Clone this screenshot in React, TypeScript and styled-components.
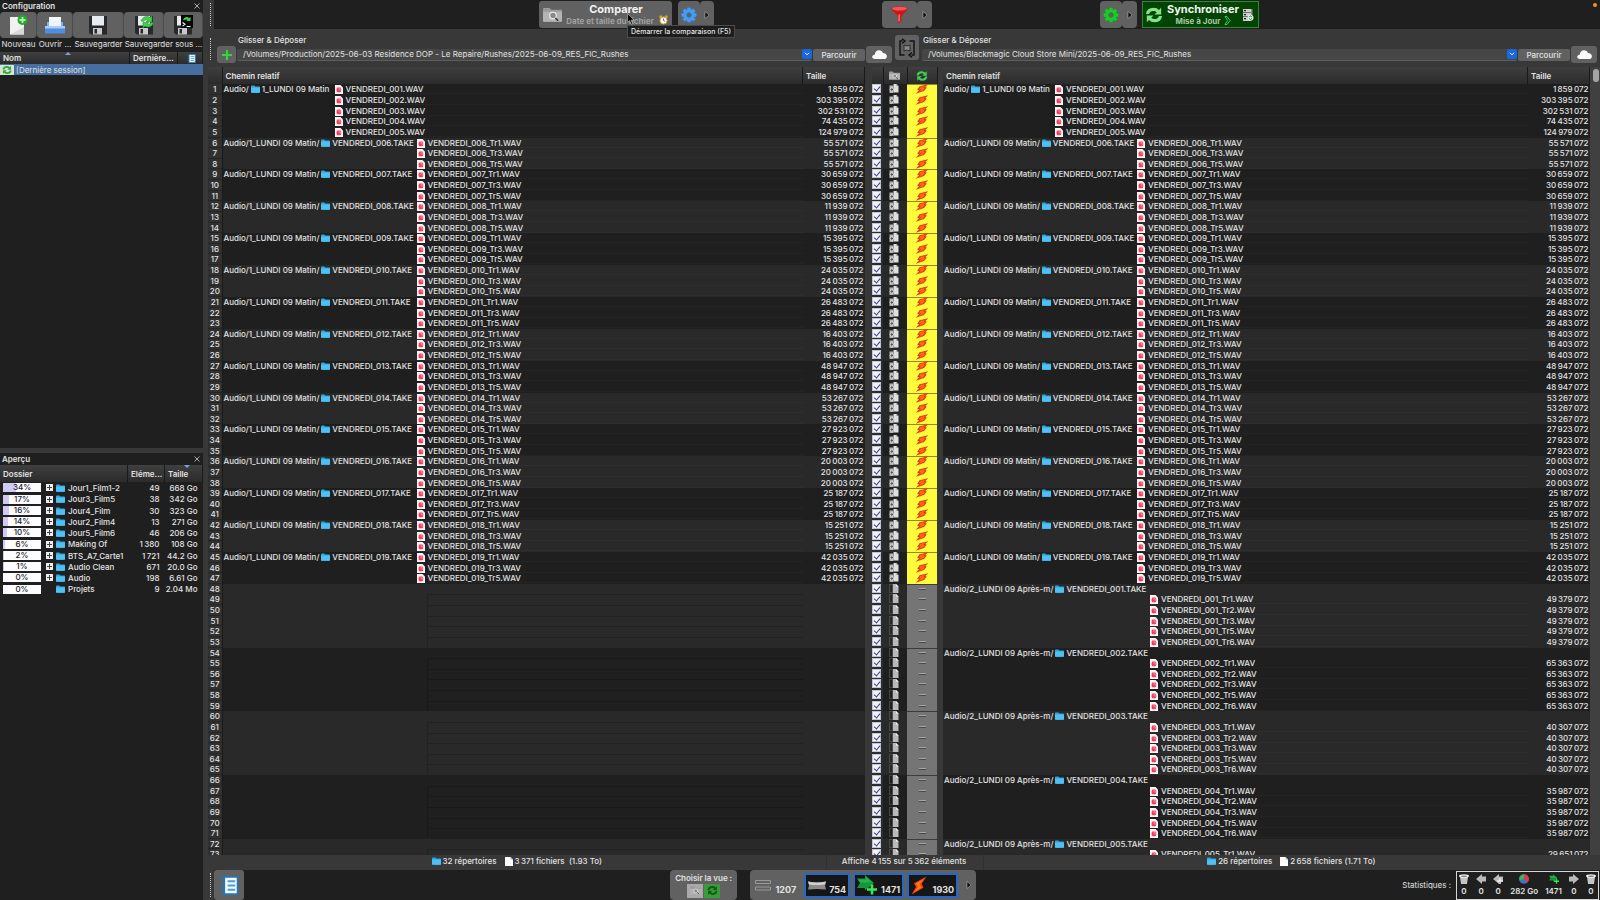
import React from 'react';
import styled, { createGlobalStyle, css } from 'styled-components';

const dark = '#1f1f1f';
const chrome = '#383838';
const button = '#616161';
const line = '#191919';

const Global = createGlobalStyle`
  * { box-sizing: border-box; }
  html, body, #root { height: 100%; }
  body { margin: 0; background: ${dark}; overflow: hidden; }
  body, button, input { font-family: Inter, "Liberation Sans", sans-serif; font-size: 8px; line-height: 10px; color: #e2e2e2; }
  button { border: 0; padding: 0; margin: 0; background: none; }
  table { border-collapse: collapse; border-spacing: 0; table-layout: fixed; width: 100%; }
  td, th { padding: 0; }
  svg { display: block; flex: none; }
`;

/* ---------- data ---------- */

const group = (n: number) => String(n).replace(/\B(?=(\d{3})+(?!\d))/g, '\u2009');

type Row = {
  no: number;
  alt: boolean;
  first: boolean;
  both: boolean;
  parent?: string;
  folder?: string;
  file?: string;
  size?: string;
  indent: 'near' | 'mid' | 'far';
};

const matin = [
  55571072, 30659072, 11939072, 15395072, 24035072, 26483072, 16403072,
  48947072, 53267072, 27923072, 20003072, 25187072, 15251072, 42035072,
];
const apres = [49379072, 65363072, 40307072, 35987072, 29651072];
const pad = (n: number) => String(n).padStart(3, '0');

const rows: Row[] = [];
const add = (r: Omit<Row, 'no'>) => rows.push({ no: rows.length + 1, ...r });

[1859072, 303395072, 302531072, 74435072, 124979072].forEach((s, i) =>
  add({
    alt: false, first: i === 0, both: true, indent: 'near', file: `VENDREDI_${pad(i + 1)}.WAV`, size: group(s),
    ...(i === 0 ? { parent: 'Audio/', folder: '1_LUNDI 09 Matin' } : {}),
  }),
);
matin.forEach((s, g) =>
  [1, 3, 5].forEach((t, i) =>
    add({
      alt: g % 2 === 0, first: i === 0, both: true, indent: 'mid',
      file: `VENDREDI_${pad(g + 6)}_Tr${t}.WAV`, size: group(s),
      ...(i === 0 ? { parent: 'Audio/1_LUNDI 09 Matin/', folder: `VENDREDI_${pad(g + 6)}.TAKE` } : {}),
    }),
  ),
);
apres.forEach((s, g) => {
  const alt = g % 2 === 0;
  add({ alt, first: true, both: false, indent: 'far', parent: 'Audio/2_LUNDI 09 Après-m/', folder: `VENDREDI_${pad(g + 1)}.TAKE` });
  (g === 4 ? [1] : [1, 2, 3, 5, 6]).forEach((t) =>
    add({ alt, first: false, both: false, indent: 'far', file: `VENDREDI_${pad(g + 1)}_Tr${t}.WAV`, size: group(s) }),
  );
});

const overview: [number, string, string, string][] = [
  [34, 'Jour1_Film1-2', '49', '668 Go'],
  [17, 'Jour3_Film5', '38', '342 Go'],
  [16, 'Jour4_Film', '30', '323 Go'],
  [14, 'Jour2_Film4', '13', '271 Go'],
  [10, 'Jour5_Film6', '46', '206 Go'],
  [6, 'Making Of', group(1380), '108 Go'],
  [2, 'BTS_A7_Carte1', group(1721), '44.2 Go'],
  [1, 'Audio Clean', '671', '20.0 Go'],
  [0, 'Audio', '198', '6.61 Go'],
  [0, 'Projets', '9', '2.04 Mo'],
];

/* ---------- icons ---------- */

const Folder = () => (
  <svg width="9" height="8" viewBox="0 0 9 8">
    <path d="M0 1.2Q0 .4.8.4h2.6l.9 1H8.2q.8 0 .8.8V7q0 .7-.8.7H.8Q0 7.700 0 7z" fill="#2ea3dc" />
    <path d="M0 2.400h9V7q0 .7-.8.7H.8Q0 7.700 0 7z" fill="#4fc0f2" />
  </svg>
);

const WavIcon = () => (
  <svg width="8" height="9" viewBox="0 0 8 9">
    <path d="M0 0h5.500L8 2.500V9H0z" fill="#fbf3f4" />
    <rect x="1.600" y="2.600" width="4.600" height="4.600" rx="1.300" fill="#ee3f5c" />
    <path d="M3.200 4l2-.4v2.200" stroke="#fbd" strokeWidth=".6" fill="none" />
  </svg>
);

const Page = () => (
  <svg width="8" height="9" viewBox="0 0 8 9">
    <path d="M0 0h5.500L8 2.500V9H0z" fill="#fff" />
    <path d="M5.500 0v2.500H8z" fill="#bbb" />
  </svg>
);

const Recycle = ({ size, color = '#3fd04c' }: { size: number; color?: string }) => (
  <svg width={size} height={size} viewBox="0 0 20 20" fill={color}>
    <path d="M1 9Q2 2 9.500 2q4 0 6 2.500L18 2v7.500h-7.500l2.600-2.600Q11.500 5.500 9.500 5.500 5.500 5.500 4.500 9z" />
    <path d="M19 11q-1 7-8.500 7-4 0-6-2.500L2 18v-7.500h7.500l-2.600 2.600q1.600 1.400 3.600 1.400 4 0 5-3.500z" />
  </svg>
);

const Gear = ({ size, color, edge }: { size: number; color: string; edge: string }) => (
  <svg width={size} height={size} viewBox="0 0 20 20">
    {[0, 45, 90, 135].map((a) => (
      <rect key={a} x="7.500" y=".5" width="5" height="19" rx="1" fill={color} stroke={edge} strokeWidth=".5" transform={`rotate(${a} 10 10)`} />
    ))}
    <circle cx="10" cy="10" r="7" fill={color} />
    <circle cx="10" cy="10" r="2.800" fill={button} stroke={edge} strokeWidth="1" />
  </svg>
);

const CameraFolder = ({ w }: { w: number }) => (
  <svg width={w} height={(w * 16) / 20} viewBox="0 0 20 16">
    <path d="M0 2Q0 1 1 1h6l1.500 2H19q1 0 1 1v10.500q0 1-1 1H1q-1 0-1-1z" fill="#9b9b9b" />
    <path d="M0 5h20v9.500q0 1-1 1H1q-1 0-1-1z" fill="#b4b4b4" />
    <circle cx="10.500" cy="9" r="3.500" fill="#8a8a8a" stroke="#eee" strokeWidth="1.200" />
    <path d="M13 11.500l3 3" stroke="#333" strokeWidth="1.600" />
  </svg>
);

const Bolt = ({ w, h }: { w: number; h: number }) => (
  <svg width={w} height={h} viewBox="0 0 16 20" preserveAspectRatio="none">
    <path d="M15.500.5L3 7.500l2 4.200L.5 19.500l12-7.200-1.800-4.200z" fill="#f4420e" />
    <path d="M13 2.800L4.800 8l2.400 3.200L3 17l7.400-5-2-3.400z" fill="#ff7a1c" />
  </svg>
);

const RowBolt = () => (
  <svg width="14" height="10" viewBox="0 0 14 10">
    <path d="M13.500 .2L4.500 2.200 2.200 6l2 .3L.6 9.800l8.400-2.800L11.800 3.400l-1.600-.3z" fill="#e0380c" />
    <path d="M10.500 1.800L5.200 3 4 5.200l2 .3L4 7.800 8.300 6.200l1.700-2.300-1.800-.2z" fill="#ff6a14" />
  </svg>
);

const Cloud = () => (
  <svg width="15" height="9" viewBox="0 0 15 9">
    <path d="M3 9Q0 8.800.2 6.500.6 4.600 2.800 4.400 3.200.4 7 .2q3 0 3.900 2.700Q14.700 3 14.900 6.200 14.800 9 12 9z" fill="#fafafa" />
  </svg>
);

const NewFile = () => (
  <svg width="20" height="20" viewBox="0 0 20 20">
    <path d="M2 2h9l5 6v11.500H2z" fill="#f1f1f1" />
    <path d="M16 19.500H2L16 12z" fill="#d8d8d8" />
    <circle cx="14.500" cy="5" r="5" fill="#27a52c" />
    <path d="M14.500 2v6M11.500 5h6" stroke="#a8f5a0" strokeWidth="1.800" />
  </svg>
);

const OpenTray = () => (
  <svg width="20" height="20" viewBox="0 0 20 20">
    <path d="M4 2h12v8H4z" fill="#f7f9fc" />
    <path d="M2 7h16v6H2z" fill="#7fb1ee" />
    <path d="M4 5h12v6H4z" fill="#eef4fc" />
    <path d="M0 11h20v7.500H0z" fill="#4e8de0" />
    <path d="M0 11h20v2.500H0z" fill="#a9cdf8" />
  </svg>
);

const Floppy = ({ badge }: { badge?: 'sync' | 'batch' }) => (
  <svg width="20" height="20" viewBox="0 0 20 20">
    <path d="M1 1h18v18.500H3l-2-2z" fill="#27292c" />
    <path d="M4 1h12v9.500H4z" fill="#e6ecef" />
    <path d="M5 13h9v6.500H5z" fill="#c9c9c9" />
    <path d="M6.500 14h2.500v4.500H6.500z" fill="#27292c" />
    {badge === 'sync' && (
      <g fill="#43d04b" stroke="#168a22" strokeWidth=".5">
        <path d="M7 6q2-5 7-4.500l2 1L18 .5V7h-6l1.700-1.700Q11 4 9.500 6.500z" />
        <path d="M19.500 7.500Q18 12.500 13 12l-2-.8L9 13V7.500h5.500L13 9q2.500 1 4-1.500z" />
      </g>
    )}
    {badge === 'batch' && (
      <g>
        <path d="M8 0h12v13H8z" fill="#060606" />
        <path d="M10 4.500q3-4 6-1.500l1.500-1v4h-4l1-1.200q-2-1-3.500.5z" fill="#43d04b" />
        <path d="M9.500 7.500l2.500 1.800-2.500 1.800M13.500 11.500h4" stroke="#fff" strokeWidth="1.100" fill="none" />
      </g>
    )}
  </svg>
);

const ListPanel = ({ size }: { size: number }) => (
  <svg width={size} height={size} viewBox="0 0 20 20">
    <path d="M4.500 1h14v18h-14z" fill="#f4f9fc" stroke="#1f78b8" strokeWidth="1.800" />
    <path d="M8 5.500h8M8 10h8M8 14.500h8" stroke="#4a9fd6" strokeWidth="1.900" />
    <path d="M1 3.500h3M1 7h3M1 10.500h3M1 14h3M1 17.500h3" stroke="#1f78b8" strokeWidth="1.300" />
  </svg>
);

const Funnel = () => (
  <svg width="17" height="18" viewBox="0 0 17 18">
    <path d="M.5 2Q8.500-1.500 16.500 2v1.500L10.500 10v5L6.800 17.800V10L.5 3.500z" fill="#d01319" />
    <ellipse cx="8.500" cy="2.600" rx="7.500" ry="1.900" fill="#f2565a" />
    <path d="M7.500 9v7l1.200-1V8z" fill="#ff8a8a" />
  </svg>
);

const Swap = () => (
  <svg width="18" height="20" viewBox="0 0 18 20" fill="none" stroke="#151515" strokeWidth="1.500">
    <path d="M4.500 3H2v14h4.500M13.500 17H16V3h-4.500" />
    <path d="M4 .8L7 3 4 5.500M14 14.500L11 17l3 2.400" />
    <path d="M6 7l3 1 3-1v6l-3-1-3 1z" fill="#8b8b8b" stroke="#2a2a2a" strokeWidth="1" />
  </svg>
);

const AlarmClock = () => (
  <svg width="9" height="10" viewBox="0 0 9 10">
    <circle cx="1.800" cy="1.800" r="1.500" fill="#d8a030" />
    <circle cx="7.200" cy="1.800" r="1.500" fill="#d8a030" />
    <circle cx="4.500" cy="5.500" r="3.500" fill="#fff" stroke="#e0a73a" />
    <path d="M4.500 3.500v2l1.500 1" stroke="#333" strokeWidth=".7" fill="none" />
  </svg>
);

const Pointer = () => (
  <svg width="8" height="12" viewBox="0 0 8 12">
    <path d="M.5.500v9l2.200-2 1.500 3.800 1.400-.6-1.500-3.600H7z" fill="#000" stroke="#ddd" strokeWidth=".5" />
  </svg>
);

const Server = () => (
  <svg width="11" height="12" viewBox="0 0 11 12">
    <path d="M0 0h8v12H0z" fill="#cfcfcf" />
    <path d="M0 3.500h8M0 7.500h8" stroke="#555" strokeWidth=".8" />
    <path d="M1 1h2v1.300H1zM1 5h2v1.300H1zM1 9h2v1.300H1z" fill="#222" />
    <path d="M8 0h1.500v6H8z" fill="#8d8d8d" />
    <circle cx="7.500" cy="8.700" r="3" fill="#e8e8e8" />
    <path d="M6 8q1.500-2 3 0M9 9.500q-1.500 2-3 0" stroke="#18a03a" fill="none" />
  </svg>
);

const Copies = () => (
  <svg width="10" height="9" viewBox="0 0 10 9">
    <path d="M4.500 0h3L9.500 2v6.500h-5z" fill="#dedede" />
    <path d="M7.500 0v2h2z" fill="#888" />
    <path d="M.5 1.500h4V9h-4z" fill="#b4b4b4" />
    <circle cx="2.800" cy="5.500" r="1.700" fill="#555" stroke="#f0f0f0" strokeWidth=".8" />
  </svg>
);

const CopyRight = () => (
  <svg width="10" height="9" viewBox="0 0 10 9">
    <path d="M.5.500h3v8h-3z" fill="none" stroke="#6a6a6a" strokeDasharray="1 1" />
    <path d="M4 0h3l2.500 2.500V9H4z" fill="#b9b9b9" />
    <path d="M7 0v2.500h2.500z" fill="#f2f2f2" />
  </svg>
);

const GreenArrow = ({ size }: { size: number }) => (
  <svg width={size} height={size} viewBox="0 0 20 20">
    <path d="M0 3.500h8V0l9 8-9 7.500V13H0l3-5z" fill="#14963a" />
    <path d="M1 4.500h8V2l6 5.500H3z" fill="#2fc45a" opacity=".6" />
    <path d="M15 9.500v10M10 14.500h10" stroke="#34e85a" strokeWidth="2.600" />
  </svg>
);

const GreyArrow = ({ dir, split }: { dir: 'left' | 'right'; split?: boolean }) => (
  <svg width="10" height="10" viewBox="0 0 10 10">
    <path
      d={dir === 'left' ? 'M0 5L6 0v2.500h4v5H6V10z' : 'M10 5L4 0v2.500H0v5h4V10z'}
      fill="#b9b9b9"
    />
    {split && <path d="M7 4v6M4 7h6" stroke="#ececec" strokeWidth="1.600" />}
  </svg>
);

const Trash = () => (
  <svg width="10" height="10" viewBox="0 0 10 10">
    <path d="M1 2.500h8L8 10H2z" fill="#c4c4c4" />
    <ellipse cx="5" cy="2" rx="5" ry="1.800" fill="#f4f4f4" />
    <ellipse cx="5" cy="2.200" rx="3.200" ry=".8" fill="#777" />
  </svg>
);

const Pie = () => (
  <svg width="10" height="10" viewBox="0 0 10 10">
    <circle cx="5" cy="5" r="4.800" fill="#3c6fd0" />
    <path d="M5 5V.2A4.800 4.800 0 0 0 .5 6.500z" fill="#47b04f" />
    <path d="M5 5V.2A4.800 4.800 0 0 1 8.500 8.300z" fill="#e23b3b" />
  </svg>
);

const Caret = () => (
  <svg width="6" height="8" viewBox="0 0 6 8">
    <path d="M1 .5L5 4 1 7.500z" fill="#0c0c0c" stroke="#c4c4c4" strokeWidth=".5" />
  </svg>
);

const Cross = () => (
  <svg width="6" height="6" viewBox="0 0 6 6">
    <path d="M.5.500l5 5M5.500.500l-5 5" stroke="#bbb" strokeWidth=".9" />
  </svg>
);

/* ---------- shell ---------- */

const Shell = styled.div`
  display: grid;
  grid-template-columns: 203px minmax(0, 1fr);
  column-gap: 5px;
  height: 100vh;
  background: ${chrome};
  overflow: hidden;
`;

const Dock = styled.aside`
  display: flex;
  flex-direction: column;
  gap: 5px;
  min-height: 0;
`;

const Panel = styled.section<{ $basis: number }>`
  flex: ${(p) => p.$basis} 1 0;
  min-height: 0;
  background: ${dark};
  display: flex;
  flex-direction: column;
`;

const PanelTitle = styled.h2`
  display: flex;
  align-items: center;
  justify-content: space-between;
  margin: 0;
  padding: 0 3px 0 2px;
  height: 12px;
  font-size: 8px;
  font-weight: 600;
`;

const Close = styled.button`
  width: 7px;
  height: 8px;
  display: grid;
  place-items: center;
`;

const FileTools = styled.div`
  display: grid;
  grid-template-columns: 37px 36px 51px 40px 39px;
`;

const Tool = styled.button`
  height: 26px;
  background: ${button};
  border-radius: 4px;
  border-right: 1px solid #4b4b4b;
  display: grid;
  place-items: center;
`;

const ToolCaption = styled.span<{ $span?: number }>`
  grid-column: span ${(p) => p.$span ?? 1};
  height: 14px;
  line-height: 12px;
  text-align: center;
  white-space: nowrap;
`;

const headFill = css`
  background: linear-gradient(#3f3f3f, #2b2b2b);
`;

const DockTable = styled.table`
  th {
    ${headFill}
    position: relative;
    text-align: left;
    font-weight: 600;
    padding-left: 3px;
    white-space: nowrap;
    border-right: 1px solid ${line};
  }
`;

const DockHead = styled.tr<{ $tall?: boolean }>`
  height: ${(p) => (p.$tall ? 17 : 12)}px;
`;

const SortMark = styled.i<{ $down?: boolean }>`
  position: absolute;
  top: 0;
  left: 50%;
  border: 3px solid transparent;
  border-top-width: 0;
  border-bottom-color: #7f9fe0;
  ${(p) => p.$down && css`border-top: 3px solid #7f9fe0; border-bottom: 0;`}
`;

const SessionRow = styled.tr`
  height: 11px;
  background: #466f9f;
`;

const Inline = styled.span`
  display: flex;
  align-items: center;
  gap: 2px;
  white-space: nowrap;
`;

const HeadIcon = styled.span`
  display: flex;
  justify-content: center;
`;

const SessionIcon = styled.span`
  padding: 0 2px;
  background: #d5e5d2;
`;

const OverRow = styled.tr`
  height: 11px;
  &:nth-child(4n + 2) { height: 12px; }
  td { white-space: nowrap; font-weight: 500; }
  td:nth-child(2), td:nth-child(3) { text-align: right; padding-right: 5px; }
`;

const OverName = styled.div`
  display: grid;
  grid-template-columns: 40px 7px 9px 1fr;
  column-gap: 3px;
  align-items: center;
  padding-left: 3px;
`;

const Share = styled.div`
  position: relative;
  height: 9px;
  width: 38px;
  background: #fcfcff;
  color: #222;
  text-align: center;
  line-height: 9px;
`;

const ShareFill = styled.i`
  position: absolute;
  inset: 0 auto 0 0;
  background: #cdcbf6;
`;

const ShareText = styled.span`
  position: relative;
`;

const Expand = styled.button<{ $empty?: boolean }>`
  width: 7px;
  height: 7px;
  display: grid;
  place-items: center;
  background: #eee;
  visibility: ${(p) => (p.$empty ? 'hidden' : 'visible')};
`;

const Main = styled.main`
  display: flex;
  flex-direction: column;
  min-width: 0;
  min-height: 0;
`;

const Bar = styled.div`
  display: flex;
  align-items: center;
  background: ${dark};
`;

const TopBar = styled(Bar)`
  height: 29px;
`;

const GripBox = styled.div`
  align-self: stretch;
  width: 6px;
  padding: 3px 2px;
  background: ${chrome};
  flex: none;
`;

const Grip = styled.div`
  height: 100%;
  border-left: 1px dotted #c9c9c9;
`;

const Space = styled.div<{ $grow: number }>`
  flex: ${(p) => p.$grow} 1 0;
`;

const Cluster = styled.div`
  display: flex;
  align-items: stretch;
  height: 27px;
`;

const Key = styled.button<{ $w: number }>`
  width: ${(p) => p.$w}px;
  background: ${button};
  border-radius: 4px;
  display: grid;
  place-items: center;
`;

const Compare = styled.button`
  position: relative;
  width: 133px;
  margin-right: 6px;
  background: ${button};
  border-radius: 3px;
  display: grid;
  grid-template-columns: 18px 1fr 9px;
  align-items: center;
  column-gap: 4px;
  padding: 0 4px;
`;

const Labels = styled.span<{ $lead?: boolean }>`
  display: grid;
  justify-items: center;
  white-space: nowrap;
  strong { padding-left: ${(p) => (p.$lead ? 12 : 0)}px; }
`;

const Big = styled.strong`
  font-size: 11px;
  line-height: 13px;
  font-weight: 700;
  color: #f4f4f4;
`;

const Sub = styled.span<{ $dim?: boolean }>`
  display: flex;
  gap: 3px;
  font-weight: 700;
  line-height: 10px;
  color: ${(p) => (p.$dim ? '#a0a0a0' : '#a9c4a9')};
`;

const ClockSlot = styled.span`
  align-self: end;
  padding-bottom: 3px;
`;

const CursorSlot = styled.span`
  position: absolute;
  left: 88px;
  top: 12px;
  z-index: 3;
`;

const Tooltip = styled.span`
  position: absolute;
  left: 88px;
  top: 24px;
  z-index: 2;
  padding: 0 3px;
  border: 1px solid #4c4c4c;
  background: #1d1d1d;
  font-size: 7px;
  line-height: 11px;
  font-weight: 500;
  color: #e2e2e2;
  white-space: nowrap;
`;

const Sync = styled.button`
  width: 117px;
  margin-left: 5px;
  background: #034403;
  border: 1px solid #2f8a37;
  display: grid;
  grid-template-columns: 18px 1fr 11px;
  column-gap: 2px;
  align-items: center;
  padding: 0 4px 0 2px;
`;

const TailSpace = styled(Space)`
  align-self: flex-start;
  display: flex;
  justify-content: flex-end;
  padding: 3px 3px 0 0;
`;

const Recording = styled.i`
  width: 4px;
  height: 4px;
  border-radius: 50%;
  background: #f7931e;
`;

const Paths = styled.div`
  display: flex;
  height: 38px;
  padding: 6px 3px 4px 0;
`;

const PathSide = styled.div<{ $left?: boolean }>`
  flex: 1 1 0;
  min-width: 0;
  display: grid;
  grid-template-rows: 11px 17px;
  padding-left: ${(p) => (p.$left ? 3 : 0)}px;
  label { padding-left: ${(p) => (p.$left ? 21 : 1)}px; font-weight: 500; }
`;

const PathRow = styled.div`
  display: flex;
  align-items: center;
  gap: 1px;
`;

const Combo = styled.div`
  flex: 1;
  display: flex;
  align-items: center;
  height: 12px;
  background: #464646;
  border-bottom: 1px solid #5e5e5e;
  border-radius: 2px;
`;

const PathInput = styled.input`
  flex: 1;
  min-width: 0;
  height: 11px;
  border: 0;
  outline: 0;
  padding: 0 6px;
  background: none;
`;

const Drop = styled.button`
  width: 10px;
  height: 10px;
  border-radius: 2px;
  background: #1668dc;
  display: grid;
  place-items: center;
`;

const Browse = styled.button`
  width: 52px;
  height: 12px;
  background: ${button};
  border-radius: 2px;
  font-weight: 500;
`;

const Square = styled.button<{ $w: number; $h: number }>`
  width: ${(p) => p.$w}px;
  height: ${(p) => p.$h}px;
  background: ${button};
  border-radius: 3px;
  display: grid;
  place-items: center;
  flex: none;
`;

const SwapSlot = styled.div`
  padding: 0 3px;
`;

/* ---------- file lists ---------- */

const Lists = styled.div`
  flex: 1;
  min-height: 0;
  overflow: hidden;
  display: flex;
`;

const Side = styled.div`
  flex: 1 1 0;
  min-width: 0;
  display: flex;
  overflow: hidden;
`;

const Middle = styled.div`
  width: 78px;
  padding: 0 6px 0 7px;
`;

const Grid = styled.table`
  font-weight: 500;
  thead tr { height: 17px; }
  th {
    ${headFill}
    text-align: left;
    font-weight: 600;
    padding-left: 3px;
    border-right: 1px solid ${line};
  }
`;

const ActionGrid = styled(Grid)`
  th { padding-left: 0; }
  th:nth-child(2), td:nth-child(2) { padding-right: 2px; }
`;

const Line = styled.tr<{ $alt: boolean }>`
  height: 11px;
  background: ${(p) => (p.$alt ? '#292929' : dark)};
  &:nth-child(8n + 3), &:nth-child(8n + 6), &:nth-child(8n + 8) { height: 10px; }
  td { height: inherit; line-height: 10px; vertical-align: top; }
`;

const No = styled.td`
  background: #303030;
  border-right: 1px solid ${line};
  text-align: center;
  box-shadow: inset 0 -1px #262626;
`;

const NameCell = styled.td`
  padding-left: 1px;
  overflow: hidden;
`;

const indents = { near: 111, mid: 193, far: 206 };

const NameFlow = styled.div`
  display: flex;
  align-items: center;
  height: 10px;
  white-space: nowrap;
`;

const PathPart = styled.span<{ $indent: Row['indent'] }>`
  display: flex;
  align-items: center;
  gap: 2px;
  flex: none;
  width: ${(p) => indents[p.$indent]}px;
`;

const FilePart = styled.span`
  flex: 1;
  display: flex;
  align-items: center;
  gap: 3px;
  height: 10px;
  box-shadow: inset 0 -1px #ffffff06;
`;

const EmptyPart = styled.div<{ $first: boolean }>`
  height: 10px;
  margin-left: 203px;
  ${(p) => !p.$first && css`box-shadow: inset 1px 1px #00000030;`}
`;

const SizeCell = styled.td`
  text-align: right;
  padding-right: 1px;
`;

const Check = styled.input`
  appearance: none;
  display: block;
  position: relative;
  width: 9px;
  height: 9px;
  margin: 0;
  background: #f2f2f6;
  border: 1px solid #c4c4cc;
  &:checked::after {
    content: '';
    position: absolute;
    left: 2px;
    top: 0;
    width: 3px;
    height: 5px;
    border: solid #33409a;
    border-width: 0 1px 1px 0;
    rotate: 40deg;
  }
`;

const CheckCell = styled.td`
  background: #2a2e31;
`;

const IconCell = styled.td`
  svg { margin: 0 auto; }
`;

const ActionCell = styled.td<{ $both: boolean; $first: boolean }>`
  background: ${(p) => (p.$both ? '#fcfc3c' : '#757575')};
  ${(p) => p.$first && css`box-shadow: inset 0 1px ${p.$both ? '#8a8a2a' : '#3c3c3c'};`}
  svg { margin: 0 auto; }
`;

const Dash = styled.i`
  display: block;
  width: 7px;
  height: 2px;
  margin: 4px auto 0;
  background: #a5a5a5;
  border-bottom: 1px solid #4a4a4a;
`;

const Scroll = styled.div`
  width: 10px;
  padding: 2px 3px;
  background: #404040;
  flex: none;
`;

const Thumb = styled.div`
  width: 6px;
  height: 13px;
  border-radius: 3px;
  background: #a5a5a5;
`;

/* ---------- footer ---------- */

const Status = styled.div`
  display: grid;
  grid-template-columns: 1fr 157px 1fr;
  height: 15px;
  font-weight: 500;
`;

const StatusPart = styled.div`
  display: flex;
  align-items: center;
  justify-content: center;
  gap: 8px;
  padding-bottom: 3px;
  & + & { box-shadow: inset 1px 0 #303030; }
`;

const BottomBar = styled(Bar)`
  height: 30px;
`;

const Views = styled.div`
  display: flex;
  height: 30px;
  background: ${button};
  border-radius: 4px;
  margin-left: 13px;
  gap: 3px;
  align-items: center;
`;

const ViewChoice = styled.div`
  width: 67px;
  height: 30px;
  background: ${button};
  border-radius: 4px;
  display: grid;
  justify-items: center;
  align-content: center;
  gap: 1px;
  font-weight: 600;
  white-space: nowrap;
`;

const Pair = styled.div`
  display: flex;
  gap: 1px;
`;

const Mini = styled.button<{ $on?: boolean }>`
  width: 16px;
  height: 14px;
  background: ${(p) => (p.$on ? '#3c9a3a' : '#a9a9a9')};
  display: grid;
  place-items: center;
`;

const Count = styled.button<{ $w: number; $on?: boolean }>`
  width: ${(p) => p.$w}px;
  height: 25px;
  display: flex;
  align-items: center;
  justify-content: space-between;
  padding: 0 5px;
  font-size: 9px;
  font-weight: 700;
  ${(p) => p.$on && css`background: #161616; border: 2px solid #2468c8; padding: 0 2px;`}
`;

const CountText = styled.span<{ $low?: boolean }>`
  align-self: end;
  padding-bottom: ${(p) => (p.$low ? 3 : 1)}px;
`;

const Stats = styled.dl`
  display: flex;
  justify-content: space-between;
  width: 143px;
  height: 29px;
  margin: 0 1px 0 5px;
  padding: 0 2px;
  border: 1px solid #d5d5d5;
`;

const Stat = styled.div`
  display: grid;
  justify-items: center;
  align-content: center;
  gap: 2px;
  min-width: 10px;
  dt { display: block; }
  dd { margin: 0; font-size: 8px; font-weight: 600; white-space: nowrap; }
`;

const PathEditor = ({ id, value, left }: { id: string; value: string; left?: boolean }) => (
  <PathSide $left={left}>
    <label htmlFor={id}>Glisser &amp; Déposer</label>
    <PathRow>
      {left && (
        <Square $w={19} $h={17} aria-label="Ajouter">
          <svg width="10" height="10" viewBox="0 0 10 10">
            <path d="M5 0v10M0 5h10" stroke="#2fd83a" strokeWidth="2.200" />
          </svg>
        </Square>
      )}
      <Combo>
        <PathInput id={id} defaultValue={value} />
        <Drop aria-label="Historique">
          <svg width="6" height="4" viewBox="0 0 6 4">
            <path d="M1 .8l2 2 2-2" stroke="#fff" fill="none" />
          </svg>
        </Drop>
      </Combo>
      <Browse>Parcourir</Browse>
      <Square $w={26} $h={17} aria-label="Cloud">
        <Cloud />
      </Square>
    </PathRow>
  </PathSide>
);

const NameContent = ({ r }: { r: Row }) => (
  <NameFlow>
    <PathPart $indent={r.indent}>
      {r.parent && (
        <>
          {r.parent}
          <Folder />
          {r.folder}
        </>
      )}
    </PathPart>
    {r.file && (
      <FilePart>
        <WavIcon />
        {r.file}
      </FilePart>
    )}
  </NameFlow>
);

export default function App() {
  return (
    <Shell>
      <Global />
      <Dock>
        <Panel $basis={445}>
          <PanelTitle>
            Configuration
            <Close aria-label="Fermer"><Cross /></Close>
          </PanelTitle>
          <FileTools>
            <Tool aria-label="Nouveau"><NewFile /></Tool>
            <Tool aria-label="Ouvrir"><OpenTray /></Tool>
            <Tool aria-label="Sauvegarder"><Floppy /></Tool>
            <Tool aria-label="Sauvegarder sous"><Floppy badge="sync" /></Tool>
            <Tool aria-label="Sauvegarder batch"><Floppy badge="batch" /></Tool>
            <ToolCaption>Nouveau</ToolCaption>
            <ToolCaption>Ouvrir ...</ToolCaption>
            <ToolCaption>Sauvegarder</ToolCaption>
            <ToolCaption $span={2}>Sauvegarder sous ...</ToolCaption>
          </FileTools>
          <DockTable>
            <colgroup><col /><col width="48" /><col width="25" /></colgroup>
            <thead>
              <DockHead>
                <th>Nom<SortMark /></th>
                <th>Dernière...</th>
                <th aria-label="Colonnes"><HeadIcon><ListPanel size={9} /></HeadIcon></th>
              </DockHead>
            </thead>
            <tbody>
              <SessionRow>
                <td colSpan={3}>
                  <Inline><SessionIcon><Recycle size={10} color="#2fa83a" /></SessionIcon>[Dernière session]</Inline>
                </td>
              </SessionRow>
            </tbody>
          </DockTable>
        </Panel>
        <Panel $basis={444}>
          <PanelTitle>
            Aperçu
            <Close aria-label="Fermer"><Cross /></Close>
          </PanelTitle>
          <div>
            <DockTable>
              <colgroup><col /><col width="37" /><col width="38" /></colgroup>
              <thead>
                <DockHead $tall>
                  <th>Dossier</th>
                  <th>Eléme...</th>
                  <th>Taille<SortMark $down /></th>
                </DockHead>
              </thead>
              <tbody>
                {overview.map(([pct, name, count, size]) => (
                  <OverRow key={name}>
                    <td>
                      <OverName>
                        <Share>
                          <ShareFill style={{ width: `${pct}%` }} />
                          <ShareText>{pct}%</ShareText>
                        </Share>
                        <Expand $empty={name === 'Projets'} aria-label={`Développer ${name}`}>
                          <svg width="5" height="5" viewBox="0 0 5 5"><path d="M2.500 0v5M0 2.500h5" stroke="#333" strokeWidth=".9" /></svg>
                        </Expand>
                        <Folder />
                        {name}
                      </OverName>
                    </td>
                    <td>{count}</td>
                    <td>{size}</td>
                  </OverRow>
                ))}
              </tbody>
            </DockTable>
          </div>
        </Panel>
      </Dock>

      <Main>
        <TopBar>
          <GripBox><Grip /></GripBox>
          <Space $grow={325} />
          <Cluster>
            <Compare>
              <CameraFolder w={19} />
              <Labels $lead>
                <Big>Comparer</Big>
                <Sub $dim>Date et taille du fichier</Sub>
              </Labels>
              <ClockSlot><AlarmClock /></ClockSlot>
              <CursorSlot><Pointer /></CursorSlot>
              <Tooltip role="tooltip">Démarrer la comparaison (F5)</Tooltip>
            </Compare>
            <Key $w={22} aria-label="Options de comparaison"><Gear size={16} color="#4a9bee" edge="#2d6fc0" /></Key>
            <Key $w={14} aria-label="Plus"><Caret /></Key>
          </Cluster>
          <Space $grow={168} />
          <Cluster>
            <Key $w={35} aria-label="Filtre"><Funnel /></Key>
            <Key $w={15} aria-label="Plus de filtres"><Caret /></Key>
          </Cluster>
          <Space $grow={168} />
          <Cluster>
            <Key $w={22} aria-label="Options de synchronisation"><Gear size={16} color="#22c52e" edge="#118a1c" /></Key>
            <Key $w={15} aria-label="Plus"><Caret /></Key>
            <Sync>
              <Recycle size={18} color="#7fe38a" />
              <Labels>
                <Big>Synchroniser</Big>
                <Sub>
                  Mise à Jour
                  <svg width="7" height="9" viewBox="0 0 7 9"><path d="M1 .5h2l3 4-3 4H1l2.500-4z" fill="none" stroke="#35c86a" /></svg>
                </Sub>
              </Labels>
              <Server />
            </Sync>
          </Cluster>
          <TailSpace $grow={338}><Recording /></TailSpace>
        </TopBar>

        <Paths>
          <GripBox><Grip /></GripBox>
          <PathEditor id="left-path" left value="/Volumes/Production/2025-06-03 Residence DOP - Le Repaire/Rushes/2025-06-09_RES_FIC_Rushes" />
          <SwapSlot>
            <Square $w={24} $h={25} aria-label="Inverser les côtés"><Swap /></Square>
          </SwapSlot>
          <PathEditor id="right-path" value="/Volumes/Blackmagic Cloud Store Mini/2025-06-09_RES_FIC_Rushes" />
        </Paths>

        <Lists>
          <Side>
            <Grid>
              <colgroup><col width="14" /><col /><col width="62" /></colgroup>
              <thead><tr><th aria-label="Ligne" /><th>Chemin relatif</th><th>Taille</th></tr></thead>
              <tbody>
                {rows.map((r) => (
                  <Line key={r.no} $alt={r.alt}>
                    <No>{r.no}</No>
                    <NameCell>{r.both ? <NameContent r={r} /> : <EmptyPart $first={r.first} />}</NameCell>
                    <SizeCell>{r.both && r.size}</SizeCell>
                  </Line>
                ))}
              </tbody>
            </Grid>
          </Side>
          <Middle>
            <ActionGrid>
              <colgroup><col width="11" /><col width="24" /><col width="30" /></colgroup>
              <thead>
                <tr>
                  <th aria-label="Actif" />
                  <th aria-label="Catégorie"><HeadIcon><CameraFolder w={11} /></HeadIcon></th>
                  <th aria-label="Action"><HeadIcon><Recycle size={12} /></HeadIcon></th>
                </tr>
              </thead>
              <tbody>
                {rows.map((r) => (
                  <Line key={r.no} $alt={r.alt}>
                    <CheckCell><Check type="checkbox" defaultChecked aria-label={`Inclure la ligne ${r.no}`} /></CheckCell>
                    <IconCell>{r.both ? <Copies /> : <CopyRight />}</IconCell>
                    <ActionCell $both={r.both} $first={r.first}>{r.both ? <RowBolt /> : <Dash />}</ActionCell>
                  </Line>
                ))}
              </tbody>
            </ActionGrid>
          </Middle>
          <Side>
            <Grid>
              <colgroup><col /><col width="62" /></colgroup>
              <thead><tr><th>Chemin relatif</th><th>Taille</th></tr></thead>
              <tbody>
                {rows.map((r) => (
                  <Line key={r.no} $alt={r.alt}>
                    <NameCell><NameContent r={r} /></NameCell>
                    <SizeCell>{r.size}</SizeCell>
                  </Line>
                ))}
              </tbody>
            </Grid>
            <Scroll><Thumb /></Scroll>
          </Side>
        </Lists>

        <Status>
          <StatusPart>
            <Inline><Folder />32 répertoires</Inline>
            <Inline><Page />{group(3371)} fichiers&nbsp; (1.93 To)</Inline>
          </StatusPart>
          <StatusPart>Affiche {group(4155)} sur {group(5362)} éléments</StatusPart>
          <StatusPart>
            <Inline><Folder />26 répertoires</Inline>
            <Inline><Page />{group(2658)} fichiers (1.71 To)</Inline>
          </StatusPart>
        </Status>

        <BottomBar>
          <GripBox><Grip /></GripBox>
          <Square $w={30} $h={30} aria-label="Configuration"><ListPanel size={19} /></Square>
          <Space $grow={1} />
          <ViewChoice>
            Choisir la vue :
            <Pair>
              <Mini aria-label="Vue par catégorie"><CameraFolder w={11} /></Mini>
              <Mini $on aria-label="Vue par action"><Recycle size={11} color="#0d5c14" /></Mini>
            </Pair>
          </ViewChoice>
          <Views>
            <Count $w={51}>
              <svg width="16" height="11" viewBox="0 0 16 11"><path d="M.5.500h15v3H.5zM.5 7h15v3H.5z" fill="none" stroke="#9a9a9a" /></svg>
              <CountText $low>1207</CountText>
            </Count>
            <Count $w={46} $on>
              <svg width="18" height="9" viewBox="0 0 18 9"><path d="M0 .5q9 2 18 0l-1 4 1 4q-9-1-18 0l1-4z" fill="#8b8b8b" /><path d="M0 .5q9 2 18 0l-1 3q-8 1-16 0z" fill="#cfcfcf" /></svg>
              <CountText>754</CountText>
            </Count>
            <Count $w={51} $on>
              <GreenArrow size={20} />
              <CountText>1471</CountText>
            </Count>
            <Count $w={51} $on>
              <Bolt w={16} h={19} />
              <CountText>1930</CountText>
            </Count>
            <Key $w={15} aria-label="Plus de vues"><Caret /></Key>
          </Views>
          <Space $grow={1} />
          <Inline>Statistiques :</Inline>
          <Stats>
            <Stat><dt><Trash /></dt><dd>0</dd></Stat>
            <Stat><dt><GreyArrow dir="left" /></dt><dd>0</dd></Stat>
            <Stat><dt><GreyArrow dir="left" split /></dt><dd>0</dd></Stat>
            <Stat><dt><Pie /></dt><dd>282 Go</dd></Stat>
            <Stat><dt><GreenArrow size={10} /></dt><dd>1471</dd></Stat>
            <Stat><dt><GreyArrow dir="right" /></dt><dd>0</dd></Stat>
            <Stat><dt><Trash /></dt><dd>0</dd></Stat>
          </Stats>
        </BottomBar>
      </Main>
    </Shell>
  );
}
